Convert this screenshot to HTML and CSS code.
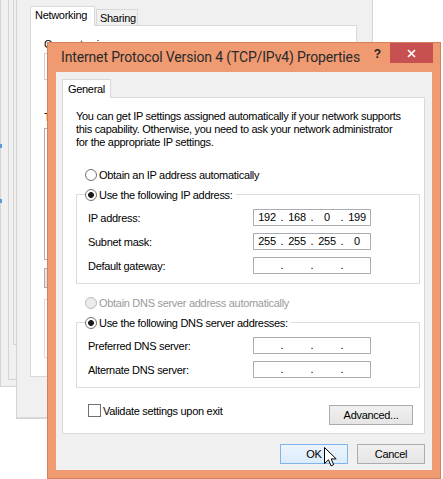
FILE: index.html
```html
<!DOCTYPE html>
<html lang="en">
<head>
  <meta charset="UTF-8">
  <title>Internet Protocol Version 4 (TCP/IPv4) Properties</title>
  <link rel="stylesheet" href="styles.css">
</head>
<body>

<div class="desktop">

  <!-- windows stacked behind -->
  <div class="back layer-a">
    <span class="speck speck-1"></span>
    <span class="speck speck-2"></span>
  </div>
  <div class="back layer-b"></div>
  <div class="back layer-c"></div>

  <div class="back back-win">
    <div class="back-tabs">
      <span class="back-tab selected">Networking</span>
      <span class="back-tab">Sharing</span>
    </div>
    <div class="back-panel">
      <div class="back-text">Connect using:</div>
      <div class="back-box adapter"></div>
      <div class="back-text items">This connection uses the following items:</div>
      <div class="back-box items-list"></div>
      <div class="back-btn"></div>
      <div class="back-box descr"></div>
    </div>
  </div>

  <!-- the active dialog -->
  <div class="dialog">
    <div class="titlebar">
      <span class="title">Internet Protocol Version 4 (TCP/IPv4) Properties</span>
      <span class="help">?</span>
      <span class="close">
        <svg width="9" height="9" viewBox="0 0 9 9"><path d="M1 1 L8 8 M8 1 L1 8" stroke="#fff" stroke-width="1.7"/></svg>
      </span>
    </div>

    <div class="client">
      <div class="tabs"><span class="tab">General</span></div>

      <div class="panel">
        <p class="intro">You can get IP settings assigned automatically if your network supports<br>this capability. Otherwise, you need to ask your network administrator<br>for the appropriate IP settings.</p>

        <div class="option"><span class="radio"></span>Obtain an IP address automatically</div>

        <fieldset class="group">
          <legend><span class="radio on"></span>Use the following IP address:</legend>
          <div class="field-row">
            <span>IP address:</span>
            <span class="ip"><span class="oct">192</span><span class="dot">.</span><span class="oct">168</span><span class="dot">.</span><span class="oct">0</span><span class="dot">.</span><span class="oct">199</span></span>
          </div>
          <div class="field-row">
            <span>Subnet mask:</span>
            <span class="ip"><span class="oct">255</span><span class="dot">.</span><span class="oct">255</span><span class="dot">.</span><span class="oct">255</span><span class="dot">.</span><span class="oct">0</span></span>
          </div>
          <div class="field-row">
            <span>Default gateway:</span>
            <span class="ip"><span class="oct"></span><span class="dot">.</span><span class="oct"></span><span class="dot">.</span><span class="oct"></span><span class="dot">.</span><span class="oct"></span></span>
          </div>
        </fieldset>

        <div class="option dns disabled"><span class="radio"></span>Obtain DNS server address automatically</div>

        <fieldset class="group">
          <legend><span class="radio on"></span>Use the following DNS server addresses:</legend>
          <div class="field-row">
            <span>Preferred DNS server:</span>
            <span class="ip"><span class="oct"></span><span class="dot">.</span><span class="oct"></span><span class="dot">.</span><span class="oct"></span><span class="dot">.</span><span class="oct"></span></span>
          </div>
          <div class="field-row">
            <span>Alternate DNS server:</span>
            <span class="ip"><span class="oct"></span><span class="dot">.</span><span class="oct"></span><span class="dot">.</span><span class="oct"></span><span class="dot">.</span><span class="oct"></span></span>
          </div>
        </fieldset>

        <div class="panel-bottom">
          <label class="check"><span class="box"></span>Validate settings upon exit</label>
          <button class="btn advanced">Advanced...</button>
        </div>
      </div>

      <div class="buttons">
        <button class="btn ok">OK</button>
        <button class="btn">Cancel</button>
      </div>
    </div>
  </div>

  <svg class="cursor" width="13" height="21" viewBox="0 0 13 21">
    <path d="M0.5 0.5 V16.5 L4.5 12.8 L7 18.8 L9.6 17.7 L7.2 11.9 H12.2 Z" fill="#fff" stroke="#000" stroke-linejoin="round"/>
  </svg>

</div>

</body>
</html>
```

FILE: styles.css
```css
* {
  box-sizing: border-box;
}

body {
  margin: 0;
  background: #fff;
  font-family: "Liberation Sans", Arial, sans-serif;
  font-size: 11px;
  letter-spacing: -0.3px;
  color: #000;
}

.desktop {
  position: relative;
  width: 443px;
  height: 479px;
  overflow: hidden;
}

/* ---------- windows behind ---------- */

.back {
  position: absolute;
  background: #f0f0f0;
  border: 1px solid #d4d4d4;
}

.layer-a {
  left: 0;
  top: -10px;
  width: 30px;
  height: 397px;
}

.layer-b {
  left: 8px;
  top: -10px;
  width: 22px;
  height: 390px;
}

.layer-c {
  left: 13px;
  top: -10px;
  width: 10px;
  height: 355px;
}

.speck {
  position: absolute;
  left: -1px;
  width: 2px;
  height: 4px;
  background: #5b9bd5;
}

.speck-1 { top: 153px; }
.speck-2 { top: 208px; }

.back-win {
  left: 16px;
  top: -10px;
  width: 357px;
  height: 429px;
  padding: 15px 0 0 13px;
  box-shadow: inset 0 -6px 0 -5px #dadada;
}

.back-tabs {
  display: flex;
  align-items: flex-end;
  height: 19px;
}

.back-tab {
  height: 16px;
  width: 42px;
  margin-left: 1px;
  padding: 2px 0 0 3px;
  border: 1px solid #d9d9d9;
  border-bottom: none;
  background: #f0f0f0;
}

.back-tab.selected {
  width: 65px;
  height: 20px;
  margin: 0 0 -1px 0;
  padding: 2px 0 0 4px;
  background: #fff;
  position: relative;
  z-index: 1;
}

.back-panel {
  width: 327px;
  height: 352px;
  padding: 13px 0 0 13px;
  background: #fff;
  border: 1px solid #d9d9d9;
}

.back-text {
  line-height: 11px;
  white-space: nowrap;
}

.back-text.items {
  margin-top: 32px;
}

.back-box {
  width: 290px;
  border: 1px solid #d0d0d0;
  background: #fff;
}

.adapter {
  height: 27px;
  margin-top: 3px;
}

.items-list {
  height: 132px;
  margin-top: 5px;
  border-color: #adadad;
}

.back-btn {
  width: 70px;
  height: 20px;
  margin-top: 8px;
  border: 1px solid #acacac;
  background: #e5e5e5;
}

.descr {
  height: 59px;
  margin-top: 11px;
  border-color: #dcdcdc;
}

/* ---------- dialog ---------- */

.dialog {
  position: absolute;
  left: 47px;
  top: 42px;
  width: 394px;
  height: 437px;
  display: flex;
  flex-direction: column;
  background: #f09a72;
  border: 1px solid #d5805b;
}

.titlebar {
  display: flex;
  height: 29px;
  flex-shrink: 0;
}

.title {
  padding: 6px 0 0 13px;
  font-family: Roboto, "Liberation Sans", sans-serif;
  font-size: 14px;
  letter-spacing: -0.15px;
  color: #2a2a2a;
}

.help {
  margin: 4px 9px 0 auto;
  font-weight: bold;
  font-size: 12px;
  letter-spacing: 0;
  color: #222;
}

.close {
  display: flex;
  align-items: center;
  justify-content: center;
  width: 43px;
  height: 20px;
  margin-right: 7px;
  background: #c75050;
}

.client {
  flex: 1;
  margin: 0 8px 8px;
  padding: 7px 7px 0 6px;
  background: #f0f0f0;
}

.tabs {
  display: flex;
}

.tab {
  position: relative;
  z-index: 1;
  width: 49px;
  height: 19px;
  margin-bottom: -1px;
  padding-top: 3px;
  text-align: center;
  background: #fff;
  border: 1px solid #d9d9d9;
  border-bottom: none;
}

.panel {
  height: 337px;
  padding: 12px 4px 0 13px;
  background: #fff;
  border: 1px solid #d9d9d9;
}

.intro {
  margin: 0;
  line-height: 13px;
}

.option {
  display: flex;
  align-items: center;
  height: 13px;
  margin-top: 19px;
  padding-left: 9px;
}

.option.dns {
  margin-top: 12px;
}

.disabled {
  color: #9a9a9a;
}

.radio {
  width: 12px;
  height: 12px;
  margin-right: 2px;
  border: 1px solid #707070;
  border-radius: 50%;
  background: #fff;
  flex-shrink: 0;
}

.radio.on {
  background: radial-gradient(circle, #1c1c1c 0 2.6px, #fff 3.2px);
}

.disabled .radio {
  border-color: #bcbcbc;
  background: #ececec;
}

.group {
  margin: 7px 0 0;
  padding: 8px 48px 9px 11px;
  min-width: 0;
  border: 1px solid #dcdcdc;
}

.group legend {
  display: flex;
  align-items: center;
  height: 13px;
  margin-left: -3px;
  padding: 0 3px 0 0;
}

.field-row {
  display: flex;
  align-items: center;
  justify-content: space-between;
  height: 17px;
}

.field-row + .field-row {
  margin-top: 7px;
}

.ip {
  display: flex;
  width: 118px;
  height: 17px;
  line-height: 15px;
  border: 1px solid #abadb3;
  background: #fff;
}

.oct {
  flex: 1;
  text-align: center;
}

.dot {
  width: 4px;
  text-align: center;
}

.panel-bottom {
  display: flex;
  justify-content: space-between;
  align-items: flex-start;
  margin-top: 16px;
  padding: 0 7px 0 12px;
}

.check {
  display: flex;
  align-items: center;
  height: 13px;
}

.box {
  width: 13px;
  height: 13px;
  margin-right: 2px;
  border: 1px solid #707070;
  background: #fff;
}

.btn {
  height: 20px;
  padding: 0;
  font-family: inherit;
  font-size: 11px;
  letter-spacing: -0.3px;
  color: #000;
  border: 1px solid #acacac;
  background: linear-gradient(#f0f0f0, #e5e5e5);
}

.advanced {
  width: 84px;
  margin-top: 1px;
}

.buttons {
  display: flex;
  justify-content: flex-end;
  gap: 9px;
  margin-top: 10px;
}

.buttons .btn {
  width: 68px;
}

.btn.ok {
  border-color: #7eb4ea;
  background: linear-gradient(#ecf4fc, #dcecfc);
}

.cursor {
  position: absolute;
  left: 324px;
  top: 447px;
}
```
